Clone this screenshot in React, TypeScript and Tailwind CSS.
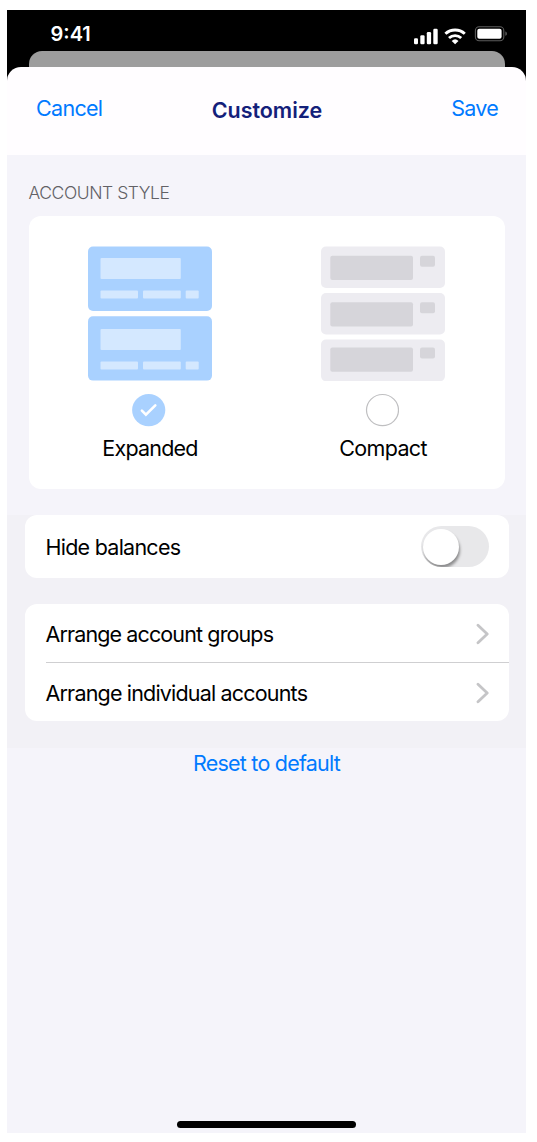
import React, { useState } from "react";

const StatusBar: React.FC = () => (
  <div className="h-[41px] flex justify-between pl-[43.5px] pr-[19px] text-white">
    <span className="mt-[9px] h-[30px] leading-[30px] text-[20px] font-semibold">
      9:41
    </span>
    <svg className="mt-[14px]" width="93" height="24" viewBox="0 0 93 24" fill="none">
      {/* signal */}
      <g fill="white">
        <rect x="0" y="14.3" width="4" height="5.9" rx="1.2" />
        <rect x="6.3" y="11.3" width="4.3" height="8.9" rx="1.2" />
        <rect x="12.8" y="8" width="4.3" height="12.2" rx="1.2" />
        <rect x="19.3" y="4.8" width="4.4" height="15.4" rx="1.2" />
      </g>
      {/* wifi */}
      <g stroke="white" strokeWidth="2.9">
        <path d="M31.4 9.8a14.2 14.2 0 0 1 19.4 0" />
        <path d="M35 14a9 9 0 0 1 12.2 0" />
      </g>
      <path d="M37.7 16.9a5 5 0 0 1 6.8 0L41.1 20.2z" fill="white" />
      {/* battery */}
      <rect x="61.4" y="2.7" width="28.4" height="14" rx="3.8" stroke="#5c5c5c" strokeWidth="1.1" />
      <rect x="63.3" y="4.8" width="24.3" height="10" rx="2" fill="white" />
      <path d="M91.3 7.6v4.2c1.1-.4 1.6-1.2 1.6-2.1s-.5-1.7-1.6-2.1z" fill="#5c5c5c" />
    </svg>
  </div>
);

const ExpandedPreview: React.FC = () => (
  <svg width="124" height="135" viewBox="0 0 124 135">
    {[
      { y: 0.5, content: 12 },
      { y: 70.2, content: 83 },
    ].map(({ y, content }) => (
      <g key={y}>
        <rect y={y} width="124" height="64.4" rx="5" fill="#A9D1FF" />
        <g fill="#D4E8FF">
          <rect x="12.5" y={content} width="80.3" height="21" rx="1" />
          <rect x="12.5" y={content + 32.5} width="37.5" height="8" rx="1" />
          <rect x="55" y={content + 32.5} width="37.8" height="8" rx="1" />
          <rect x="97.7" y={content + 32.5} width="13" height="8" rx="1" />
        </g>
      </g>
    ))}
  </svg>
);

const CompactPreview: React.FC = () => (
  <svg width="124" height="135" viewBox="0 0 124 135">
    {[
      { y: 0.5, content: 9.8 },
      { y: 47, content: 56.3 },
      { y: 93.6, content: 101.5 },
    ].map(({ y, content }) => (
      <g key={y}>
        <rect y={y} width="124" height="41.5" rx="5" fill="#EDECF1" />
        <g fill="#D6D5DA">
          <rect x="9.3" y={content} width="82.7" height="24.2" rx="2" />
          <rect x="99" y={content} width="15" height="11" rx="2" />
        </g>
      </g>
    ))}
  </svg>
);

interface StyleOptionProps {
  label: string;
  selected: boolean;
  labelClass: string;
  onSelect: () => void;
  children: React.ReactNode;
}

const StyleOption: React.FC<StyleOptionProps> = (props) => {
  const { label, selected, labelClass, onSelect, children } = props;

  return (
    <button type="button" onClick={onSelect} className="w-[124px] flex flex-col items-center">
      {children}
      <svg className="mt-[12px] mr-[2px]" width="34" height="34" viewBox="0 0 34 34" fill="none">
        {selected ? (
          <>
            <ellipse cx="16.7" cy="17.1" rx="16.6" ry="16.1" fill="#A9D1FF" />
            <path
              d="M9.9 17.7l4 4L23.3 12.4"
              stroke="white"
              strokeWidth="2.6"
              strokeLinecap="round"
            />
          </>
        ) : (
          <ellipse cx="17.5" cy="17.1" rx="16" ry="15.6" stroke="#BFBFC1" strokeWidth="1.2" />
        )}
      </svg>
      <span className={`mt-[6px] leading-[30px] text-[21.5px] ${labelClass}`}>{label}</span>
    </button>
  );
};

interface ArrangeRowProps {
  label: string;
  className: string;
}

const ArrangeRow: React.FC<ArrangeRowProps> = ({ label, className }) => (
  <button
    type="button"
    className={`w-full h-[58.5px] flex items-center justify-between pr-[20.5px] pt-px text-[21.5px] ${className}`}
  >
    {label}
    <svg width="13" height="22" viewBox="0 0 13 22" fill="none">
      <path
        d="M2 2.3L11.2 11L2 19.7"
        stroke="#C5C5C7"
        strokeWidth="2.8"
        strokeLinecap="round"
        strokeLinejoin="round"
      />
    </svg>
  </button>
);

const App: React.FC = () => {
  const [accountStyle, setAccountStyle] = useState("expanded");
  const [hideBalances, setHideBalances] = useState(false);

  return (
    <div className="w-[537px] h-[1142px] bg-white pt-[10px] pl-[7px] font-['Inter','Liberation_Sans',sans-serif] text-black">
      <div className="w-[519px] h-[1123px] flex flex-col bg-[#F5F4FA]">
        <div className="bg-black">
          <StatusBar />
          <div className="h-[16px] ml-[21.5px] mr-[21px] rounded-t-[13px] bg-[#9D9D9D]" />
          <header className="h-[88px] flex items-start justify-between rounded-t-[14px] bg-[#FFFDFF] pl-[29px] pr-[28px] pt-[26px] leading-[30px] text-[21.5px] text-[#007AFF]">
            <button type="button" className="w-[80px] text-left tracking-[-0.7px]">
              Cancel
            </button>
            <h1 className="mt-[2px] font-semibold tracking-[-0.05px] text-[#13207A]">Customize</h1>
            <button type="button" className="w-[80px] text-right tracking-[-0.75px]">
              Save
            </button>
          </header>
        </div>

        <h2 className="mt-[26px] ml-[21.5px] leading-[24px] text-[17.5px] font-light tracking-[-0.45px] text-[#626166]">
          ACCOUNT STYLE
        </h2>
        <div className="mt-[11px] h-[273px] ml-[21.5px] mr-[21px] flex justify-between rounded-xl bg-white pl-[59.5px] pr-[60px] pt-[30px]">
          <StyleOption
            label="Expanded"
            labelClass="tracking-[-0.8px]"
            selected={accountStyle === "expanded"}
            onSelect={() => setAccountStyle("expanded")}
          >
            <ExpandedPreview />
          </StyleOption>
          <StyleOption
            label="Compact"
            labelClass="tracking-[-0.65px]"
            selected={accountStyle === "compact"}
            onSelect={() => setAccountStyle("compact")}
          >
            <CompactPreview />
          </StyleOption>
        </div>

        <div className="mt-[26px] h-[233px] bg-[#F2F1F6] pl-[17.5px] pr-[17px] pt-[0.4px]">
          <div className="h-[62.5px] flex items-center justify-between rounded-xl bg-white pl-[21px] pr-[20.5px]">
            <span className="pt-px text-[21.5px] tracking-[-0.75px]">Hide balances</span>
            <button
              type="button"
              role="switch"
              aria-checked={hideBalances}
              aria-label="Hide balances"
              onClick={() => setHideBalances(!hideBalances)}
              className={`w-[68px] h-[41px] flex items-center overflow-hidden rounded-full px-[2.5px] ${
                hideBalances ? "justify-end bg-[#34C759]" : "bg-[#E8E8EA]"
              }`}
            >
              <span className="size-[36px] rounded-full bg-white shadow-[1px_3px_3px_rgba(0,0,0,0.4)]" />
            </button>
          </div>

          <div className="mt-[26.5px] h-[117px] rounded-xl bg-white pl-[21px]">
            <ArrangeRow
              label="Arrange account groups"
              className="border-b border-[#CFCFD1] tracking-[-0.88px]"
            />
            <ArrangeRow label="Arrange individual accounts" className="tracking-[-0.82px]" />
          </div>
        </div>

        <button
          type="button"
          className="self-center leading-[30px] text-[21.5px] tracking-[-0.78px] text-[#007AFF]"
        >
          Reset to default
        </button>
        <div className="mt-auto mb-[5.5px] h-[7px] w-[178.5px] self-center rounded-full bg-black" />
      </div>
    </div>
  );
};

export default App;
